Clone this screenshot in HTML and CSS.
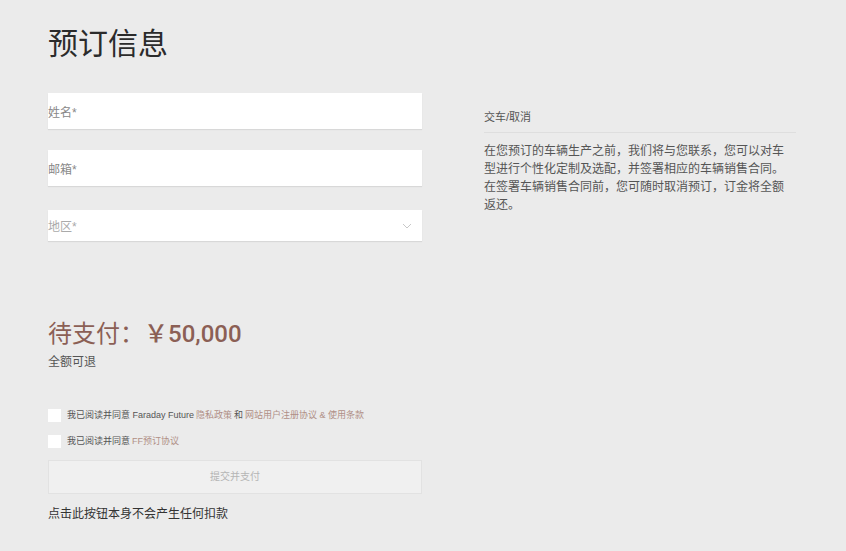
FILE: index.html
```html
<!DOCTYPE html>
<html lang="zh-CN">
<head>
    <meta charset="UTF-8">
    <title>预订信息</title>
    <link rel="stylesheet" href="styles.css">
</head>
<body>
    <div class="page">
        <h1 class="title">预订信息</h1>
        <div class="main">
            <div class="form">
                <div class="field"><span class="ph">姓名*</span></div>
                <div class="field second"><span class="ph">邮箱*</span></div>
                <div class="field select">
                    <span class="ph light">地区*</span>
                    <svg class="arrow" width="10" height="6" viewBox="0 0 10 6"><path d="M1 1 L5 5 L9 1" fill="none" stroke="#c8c8c8" stroke-width="1"/></svg>
                </div>
            </div>
            <div class="side">
                <div class="side-title">交车/取消</div>
                <p class="side-text">在您预订的车辆生产之前，我们将与您联系，您可以对车型进行个性化定制及选配，并签署相应的车辆销售合同。在签署车辆销售合同前，您可随时取消预订，订金将全额返还。</p>
            </div>
        </div>

        <div class="price">
            <div class="amount"><span class="label">待支付：</span><span class="num">￥50,000</span></div>
            <div class="refund">全额可退</div>
        </div>

        <div class="agree">
            <label class="check"><span class="box"></span>我已阅读并同意 Faraday Future <a>隐私政策</a> 和 <a>网站用户注册协议 &amp; 使用条款</a></label>
            <label class="check"><span class="box"></span>我已阅读并同意 <a>FF预订协议</a></label>
        </div>
        <div class="submit">提交并支付</div>
        <div class="note">点击此按钮本身不会产生任何扣款</div>
    </div>
</body>
</html>
```

FILE: styles.css
```css
* {
    padding: 0;
    margin: 0;
    box-sizing: border-box;
}
body {
    background: #ebebeb;
    font-family: "Liberation Sans", "Noto Sans CJK SC", sans-serif;
    color: #333;
}
.page {
    padding: 24px 0 0 48px;
}
.title {
    font-size: 30px;
    font-weight: normal;
    line-height: 40px;
    color: #2b2b2b;
}
.main {
    display: flex;
    margin-top: 29px;
}
.form {
    width: 374px;
}
.field {
    height: 36px;
    background: #fff;
    box-shadow: 0 1px 1px rgba(0,0,0,0.08);
    display: flex;
    align-items: center;
    font-size: 12px;
    color: #888;
}
.field.second {
    margin-top: 21px;
}
.field.select {
    margin-top: 24px;
    height: 31px;
    justify-content: space-between;
    padding-right: 10px;
}
.ph.light {
    color: #aaa;
}
.side {
    margin-left: 62px;
    width: 312px;
    padding-top: 17px;
}
.side-title {
    font-size: 11px;
    color: #555;
    line-height: 14px;
    padding-bottom: 8px;
    border-bottom: 1px solid #dedede;
}
.side-text {
    font-size: 12px;
    line-height: 18px;
    color: #555;
    margin-top: 9px;
    width: 304px;
}
.price {
    margin-top: 78px;
}
.amount {
    color: #8b5f55;
    line-height: 30px;
}
.label {
    font-size: 24px;
}
.num {
    font-family: Roboto, "Noto Sans CJK SC", sans-serif;
    font-size: 24px;
    font-weight: 500;
}
.refund {
    font-size: 12px;
    line-height: 16px;
    margin-top: 2px;
    color: #555;
}
.agree {
    margin-top: 38px;
    display: flex;
    flex-direction: column;
    gap: 11px;
}
.check {
    display: flex;
    align-items: center;
    font-size: 9px;
    color: #555;
    line-height: 15px;
}
.box {
    width: 13px;
    height: 13px;
    background: #fff;
    margin-right: 6px;
}
.check a {
    color: #b08f86;
    margin: 0 2px;
}
.submit {
    width: 374px;
    height: 34px;
    margin-top: 11px;
    background: #f0f0f0;
    border: 1px solid #e2e2e2;
    text-align: center;
    line-height: 32px;
    font-size: 10px;
    color: #b5b5b5;
}
.note {
    font-size: 12px;
    line-height: 16px;
    margin-top: 12px;
    color: #333;
}
```
